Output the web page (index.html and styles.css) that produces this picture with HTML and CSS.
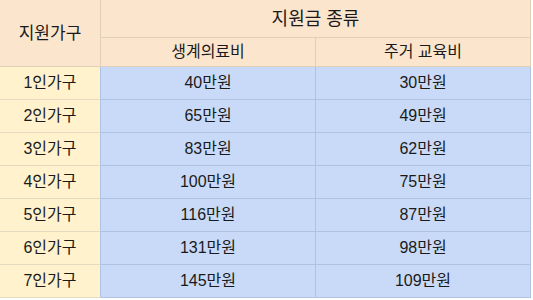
FILE: index.html
```html
<!DOCTYPE html>
<html lang="ko">
<head>
<meta charset="utf-8">
<link rel="stylesheet" href="styles.css">
</head>
<body>
<div class="sheet">
  <div class="cell head corner">지원가구</div>
  <div class="cell head group">지원금 종류</div>
  <div class="cell head sub">생계의료비</div>
  <div class="cell head sub">주거 교육비</div>

  <div class="cell label">1인가구</div><div class="cell val">40만원</div><div class="cell val">30만원</div>
  <div class="cell label">2인가구</div><div class="cell val">65만원</div><div class="cell val">49만원</div>
  <div class="cell label">3인가구</div><div class="cell val">83만원</div><div class="cell val">62만원</div>
  <div class="cell label">4인가구</div><div class="cell val">100만원</div><div class="cell val">75만원</div>
  <div class="cell label">5인가구</div><div class="cell val">116만원</div><div class="cell val">87만원</div>
  <div class="cell label">6인가구</div><div class="cell val">131만원</div><div class="cell val">98만원</div>
  <div class="cell label">7인가구</div><div class="cell val">145만원</div><div class="cell val">109만원</div>
</div>
</body>
</html>
```

FILE: styles.css
```css
html, body {
  margin: 0;
  padding: 0;
  background: #ffffff;
}

body {
  font-family: "Liberation Sans", "Noto Sans CJK KR", Arial, sans-serif;
  color: #1a1a1a;
}

.sheet {
  display: grid;
  grid-template-columns: 101px 215px 215px;
  grid-template-rows: 38px 29px repeat(7, 33px);
  width: 531px;
}

.cell {
  box-sizing: border-box;
  display: flex;
  align-items: center;
  justify-content: center;
  border-right: 1px solid #aec2e4;
  border-bottom: 1px solid #aec2e4;
  font-size: 16px;
  line-height: 1;
  white-space: nowrap;
}

.head {
  background: #fce5cd;
  border-color: #e2cfb9;
}

.corner {
  grid-row: 1 / span 2;
  font-size: 17px;
}

.group {
  grid-column: 2 / span 2;
  font-size: 18px;
}

.sub {
  font-size: 16px;
}

.label {
  background: #fff2cc;
  border-bottom-color: #e3dac0;
  border-right-color: #aec2e4;
}

.val {
  background: #c9daf8;
}
```
